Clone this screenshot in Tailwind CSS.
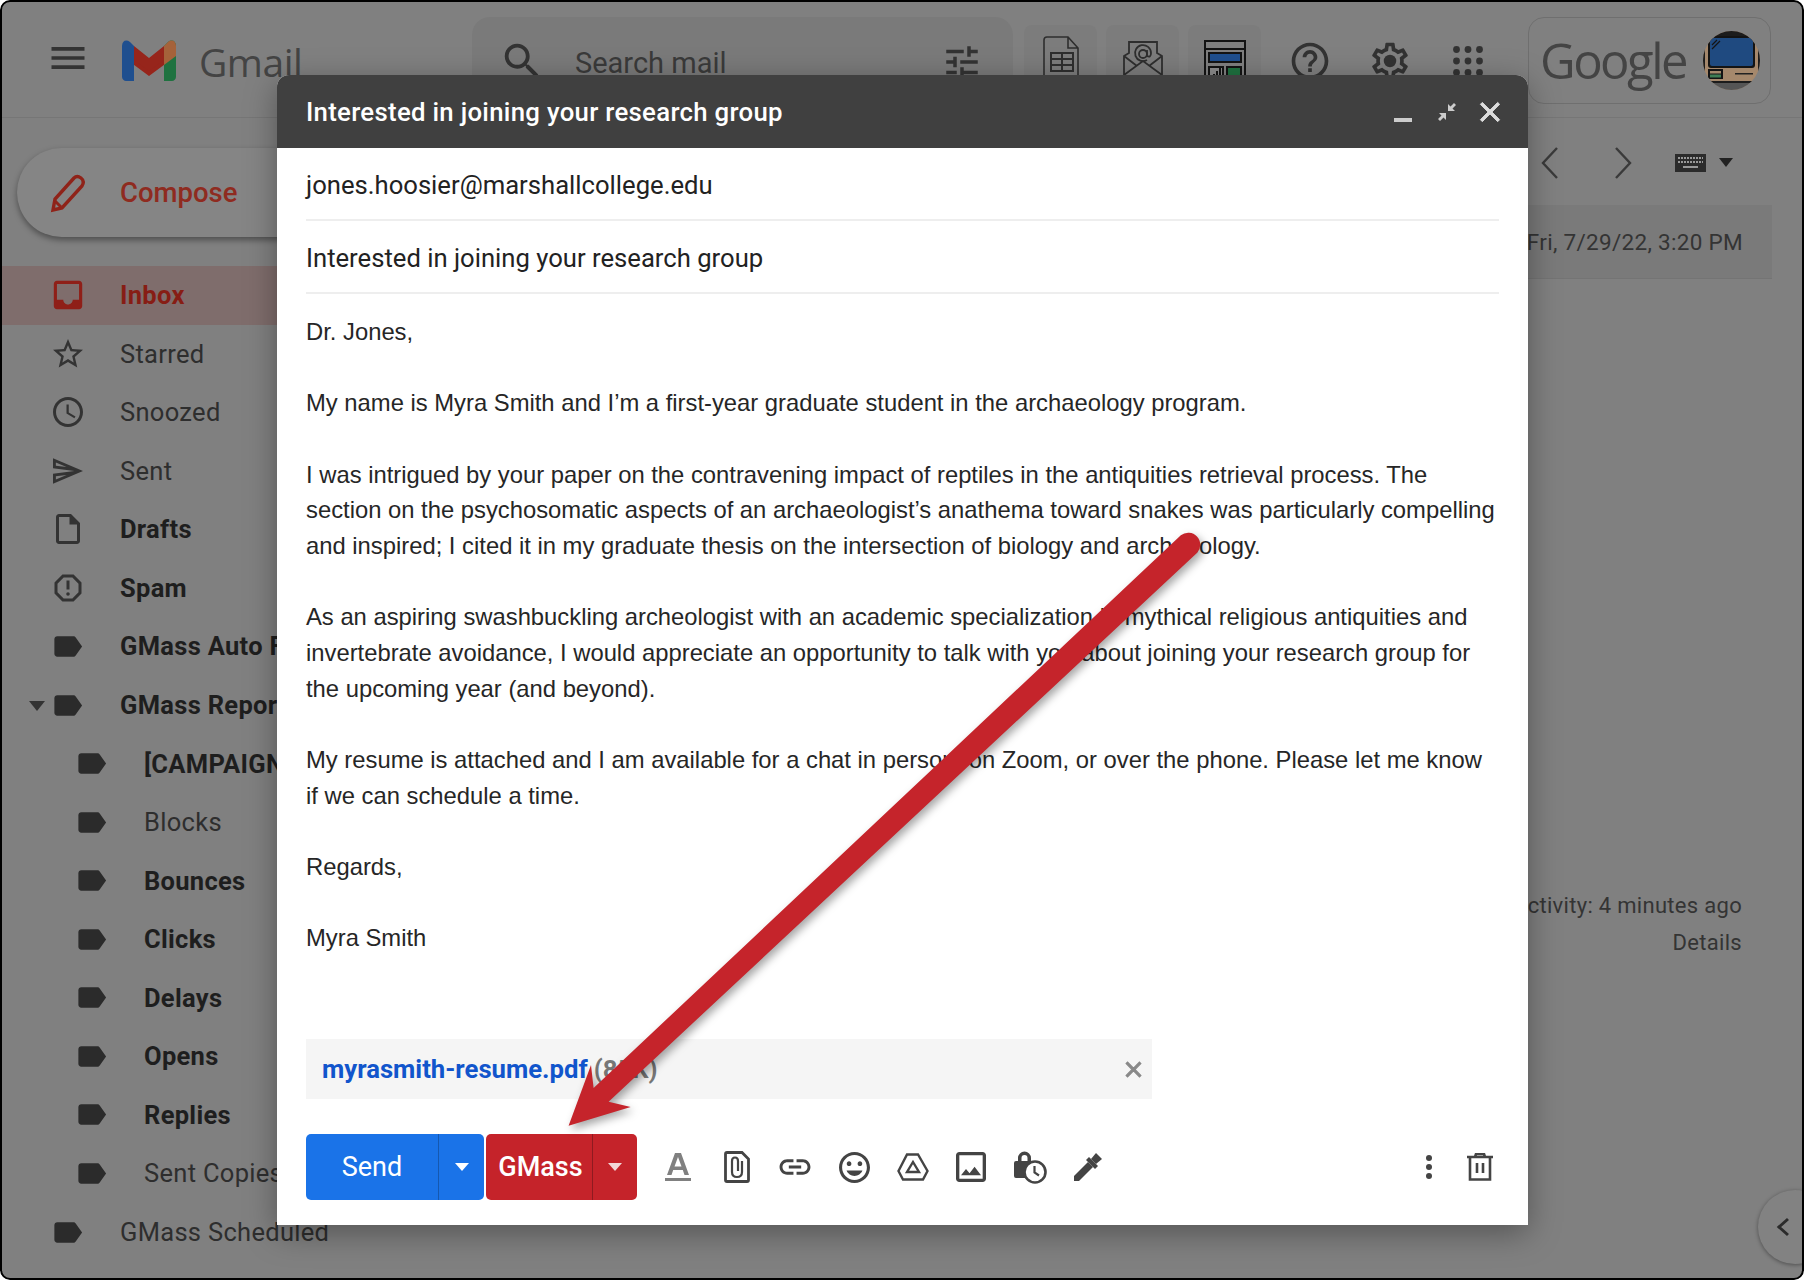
<!DOCTYPE html>
<html lang="en">
<head>
<meta charset="utf-8">
<title>Gmail - GMass compose</title>
<script src="https://cdn.jsdelivr.net/npm/@tailwindcss/browser@4"></script>
</head>
<body class="bg-white">
<svg class="hidden">
  <symbol id="label" viewBox="0 0 24 24"><path d="M17.63 5.84C17.27 5.33 16.67 5 16 5L5 5.01C3.9 5.01 3 5.9 3 7v10c0 1.1.9 1.99 2 1.99L16 19c.67 0 1.27-.33 1.63-.84L22 12l-4.37-6.16z"/></symbol>
</svg>

<div class="relative w-[1804px] h-[1280px] overflow-hidden rounded-[10px] bg-[#808080] font-['Roboto',sans-serif] text-[#2e2e2e]">

  <!-- top bar -->
  <header class="flex h-[118px] border-b border-[#767676]">
    <div class="flex w-[472px] shrink-0 pl-[46px] pt-[36px]">
      <svg class="w-[44px] h-[44px] fill-[#333]" viewBox="0 0 24 24"><path d="M3 18h18v-2H3v2zm0-5h18v-2H3v2zm0-7v2h18V6H3z"/></svg>
      <svg class="ml-[32px] mt-[4px] w-[54px] h-[41px]" viewBox="0 0 54 41">
        <path d="M0 6 27 26 54 6V16L27 36 0 16Z" fill="#97251b"/>
        <path d="M0 6C0 1 4-1 8 2L12 6V41H4C2 41 0 39 0 37Z" fill="#1f4f8f"/>
        <path d="M54 6C54 1 50-1 46 2L42 6V41H50C52 41 54 39 54 37Z" fill="#1f7240"/>
        <path d="M42 6 46 2C50-1 54 1 54 6V16L42 25Z" fill="#a5623a"/>
        <path d="M12 6 27 18 42 6V20L27 31 12 20Z" fill="#97251b"/>
      </svg>
      <span class="ml-[23px] mt-[-2px] text-[39px] leading-[56px] tracking-[-0.5px] font-['Open_Sans',sans-serif] text-[#444]">Gmail</span>
    </div>
    <div class="flex w-[541px] h-[90px] mt-[17px] shrink-0 rounded-t-[18px] bg-[#7a7a7a]">
      <svg class="ml-[27px] mt-[21px] w-[46px] h-[46px] fill-[#333]" viewBox="0 0 24 24"><path d="M15.5 14h-.79l-.28-.27C15.41 12.59 16 11.11 16 9.5 16 5.91 13.09 3 9.5 3S3 5.91 3 9.500 5.91 16 9.5 16c1.61 0 3.09-.59 4.23-1.57l.27.28v.79l5 4.99L20.49 19l-4.99-5zm-6 0C7.01 14 5 11.99 5 9.5S7.01 5 9.5 5 14 7.01 14 9.5 11.99 14 9.5 14z"/></svg>
      <span class="ml-[30px] mt-[28px] text-[29px] leading-[36px] text-[#3a3a3a]">Search mail</span>
      <svg class="ml-auto mr-[30px] mt-[24px] w-[42px] h-[42px] fill-[#333]" viewBox="0 0 24 24"><path d="M3 17v2h6v-2H3zM3 5v2h10V5H3zm10 16v-2h8v-2h-8v-2h-2v6h2zM7 9v2H3v2h4v2h2V9H7zm14 4v-2H11v2h10zm-6-4h2V7h4V5h-4V3h-2v6z"/></svg>
    </div>
    <div class="flex gap-[9px] ml-[11px] mt-[25px] shrink-0">
      <div class="flex justify-center w-[73px] h-[70px] rounded-t-[8px] bg-[#7c7c7c]">
        <svg class="mt-[11px] w-[38px] h-[50px] fill-none stroke-[#2e2e2e] stroke-[1.6]" viewBox="0 0 38 50"><path d="M5 1H26L36 12V46Q36 49 33 49H5Q2 49 2 46V4Q2 1 5 1ZM26 1V12H36"/><path d="M9 17H31V35H9ZM9 23H31M9 29H31M20 17V35" stroke-width="2"/></svg>
      </div>
      <div class="flex justify-center w-[73px] h-[70px] rounded-t-[8px] bg-[#7c7c7c]">
        <svg class="mt-[15px] w-[40px] h-[50px] fill-none stroke-[#2e2e2e] stroke-[1.8]" viewBox="0 0 40 50"><path d="M1 16V48H39V16L34 13V2H6V13ZM1 16 14 26M39 16 26 26M1 35 20 21 39 35"/><circle cx="20" cy="14" r="4"/><path d="M24 10V16Q28 18 28 13A8 8 0 1 0 24 20"/></svg>
      </div>
      <div class="flex justify-center w-[73px] h-[70px] rounded-t-[8px] bg-[#7c7c7c]">
        <svg class="mt-[15px] w-[42px] h-[60px]" viewBox="0 0 42 60">
          <rect width="42" height="60" fill="#141414"/><rect x="2" y="2" width="38" height="56" fill="#808080"/><rect x="0" y="8" width="42" height="2" fill="#141414"/>
          <rect x="4" y="12" width="34" height="11" fill="#141414"/><rect x="6" y="14" width="30" height="7" fill="#1f4f8f"/>
          <rect x="4" y="26" width="16" height="30" fill="#141414"/><rect x="6" y="28" width="12" height="26" fill="#8c8c8c"/>
          <path d="M9 40H11V34H9ZM12 40H14V31H12ZM15 40H17V28H15Z" fill="#141414"/>
          <rect x="22" y="26" width="16" height="30" fill="#141414"/><rect x="24" y="28" width="12" height="26" fill="#1f7240"/>
        </svg>
      </div>
    </div>
    <div class="flex shrink-0">
      <svg class="ml-[27px] mt-[39px] w-[44px] h-[44px] fill-[#333]" viewBox="0 0 24 24"><path d="M11 18h2v-2h-2v2zm1-16C6.48 2 2 6.48 2 12s4.48 10 10 10 10-4.48 10-10S17.52 2 12 2zm0 18c-4.41 0-8-3.59-8-8s3.59-8 8-8 8 3.59 8 8-3.59 8-8 8zm0-14c-2.21 0-4 1.79-4 4h2c0-1.1.9-2 2-2s2 .9 2 2c0 2-3 1.75-3 5h2c0-2.25 3-2.5 3-5 0-2.21-1.79-4-4-4z"/></svg>
      <svg class="ml-[36px] mt-[39px] w-[44px] h-[44px] fill-[#333]" viewBox="0 0 24 24"><path d="M19.43 12.98c.04-.32.07-.64.07-.98 0-.34-.03-.66-.07-.98l2.11-1.65c.19-.15.24-.42.12-.64l-2-3.46c-.09-.16-.26-.25-.44-.25-.06 0-.12.01-.17.03l-2.49 1c-.52-.4-1.08-.73-1.69-.98l-.38-2.65C14.46 2.18 14.25 2 14 2h-4c-.25 0-.46.18-.49.42l-.38 2.65c-.61.25-1.17.59-1.69.98l-2.49-1c-.06-.02-.12-.03-.18-.03-.17 0-.34.09-.43.25l-2 3.46c-.13.22-.07.49.12.64l2.11 1.65c-.04.32-.07.65-.07.98 0 .33.03.66.07.98l-2.11 1.65c-.19.15-.24.42-.12.64l2 3.46c.09.16.26.25.44.25.06 0 .12-.01.17-.03l2.49-1c.52.4 1.08.73 1.69.98l.38 2.65c.03.24.24.42.49.42h4c.25 0 .46-.18.49-.42l.38-2.65c.61-.25 1.17-.59 1.69-.98l2.49 1c.06.02.12.03.18.03.17 0 .34-.09.43-.25l2-3.46c.12-.22.07-.49-.12-.64l-2.11-1.65zm-1.98-1.71c.04.31.05.52.05.73 0 .21-.02.43-.05.73l-.14 1.13.89.7 1.08.84-.7 1.21-1.27-.51-1.04-.42-.9.68c-.43.32-.84.56-1.25.73l-1.06.43-.16 1.13-.2 1.35h-1.4l-.19-1.35-.16-1.13-1.06-.43c-.43-.18-.83-.41-1.23-.71l-.91-.7-1.06.43-1.27.51-.7-1.21 1.08-.84.89-.7-.14-1.13c-.03-.31-.05-.54-.05-.74s.02-.43.05-.73l.14-1.13-.89-.7-1.08-.84.7-1.21 1.27.51 1.04.42.9-.68c.43-.32.84-.56 1.25-.73l1.06-.43.16-1.13.2-1.35h1.39l.19 1.35.16 1.13 1.06.43c.43.18.83.41 1.23.71l.91.7 1.06-.43 1.27-.51.7 1.21-1.07.85-.89.7.14 1.13z"/><circle cx="12" cy="12" r="3.4"/></svg>
      <svg class="ml-[34px] mt-[39px] w-[44px] h-[44px] fill-[#333]" viewBox="0 0 44 44"><circle cx="10.500" cy="10.500" r="3.400"/><circle cx="22" cy="10.500" r="3.400"/><circle cx="33.500" cy="10.500" r="3.400"/><circle cx="10.500" cy="22" r="3.400"/><circle cx="22" cy="22" r="3.400"/><circle cx="33.500" cy="22" r="3.400"/><circle cx="10.500" cy="33.500" r="3.400"/><circle cx="22" cy="33.500" r="3.400"/><circle cx="33.500" cy="33.500" r="3.400"/></svg>
    </div>
    <div class="flex items-center w-[243px] h-[87px] ml-[38px] mt-[17px] shrink-0 rounded-[16px] border border-[#6f6f6f] pl-[11px]">
      <span class="font-['Open_Sans',sans-serif] font-medium text-[49px] leading-[60px] tracking-[-2.500px] text-[#444] mt-[-1px]">Google</span>
      <svg class="ml-auto mr-[10px] w-[57px] h-[59px]" viewBox="0 0 57 59">
        <clipPath id="av"><ellipse cx="28.500" cy="29.500" rx="28.500" ry="29.500"/></clipPath>
        <g clip-path="url(#av)">
          <rect width="57" height="59" fill="#a5886c"/>
          <rect width="57" height="5" fill="#1c1c1c"/><rect y="51" width="57" height="8" fill="#555"/><rect y="50" width="57" height="2" fill="#1c1c1c"/>
          <rect width="2" height="59" fill="#1c1c1c"/><rect x="55" width="2" height="59" fill="#1c1c1c"/>
          <rect x="5" y="5" width="47" height="32" rx="3" fill="#141414"/><rect x="7" y="7" width="43" height="28" rx="2" fill="#1f4a80"/>
          <path d="M9 14 14 9M9 18 17 10" stroke="#141414" stroke-width="1.200"/>
          <rect x="5" y="38" width="15" height="10" fill="#141414"/><rect x="7" y="40" width="11" height="2.500" fill="#a5886c"/><rect x="7" y="43.500" width="11" height="3" fill="#3f7d55"/>
          <rect x="32" y="42" width="18" height="1.500" fill="#222"/>
        </g>
      </svg>
    </div>
  </header>

  <div class="flex">
    <!-- sidebar -->
    <aside class="w-[277px] shrink-0">
      <div class="pl-[17px] pt-[30px]">
        <div class="flex items-center w-[340px] h-[89px] rounded-full bg-[#858585] shadow-[0_3px_6px_rgba(0,0,0,0.4)] pl-[31px]">
          <svg class="w-[40px] h-[40px] fill-none stroke-[#8f2319] stroke-[3.4] mt-[2px]" viewBox="0 0 40 40"><path d="M5 36 7 25 26 4Q29 1 33 4T34 12L14 34Z"/><path d="M7 27 13 33" stroke-width="3"/></svg>
          <span class="ml-[32px] text-[27.5px] leading-[40px] font-medium text-[#8f2b20]">Compose</span>
        </div>
      </div>
      <nav class="mt-[29px] text-[25.5px] tracking-[0.3px]">
        <div class="flex items-center h-[58.56px] bg-[#7f6d6c] pl-[53px] font-bold text-[#871d15]">
          <svg class="w-[30px] h-[30px] shrink-0 fill-[#8f1f18] mr-[37px]" viewBox="2.500 2.500 19 19"><path d="M19 3H4.99c-1.11 0-1.98.89-1.98 2L3 19c0 1.1.88 2 1.99 2H19c1.1 0 2-.9 2-2V5c0-1.11-.9-2-2-2zm0 12h-4c0 1.66-1.35 3-3 3s-3-1.34-3-3H4.99V5H19v10z"/></svg>
          <span class="min-w-0 overflow-hidden whitespace-nowrap">Inbox</span>
        </div>
        <div class="flex items-center h-[58.56px] pl-[53px]">
          <svg class="w-[30px] h-[30px] shrink-0 fill-[#333] mr-[37px]" viewBox="2 2 20 20"><path d="M22 9.24l-7.19-.62L12 2 9.19 8.63 2 9.24l5.46 4.73L5.82 21 12 17.27 18.18 21l-1.63-7.03L22 9.24zM12 15.4l-3.76 2.27 1-4.28-3.32-2.88 4.38-.38L12 6.1l1.71 4.04 4.38.38-3.32 2.88 1 4.28L12 15.4z"/></svg>
          <span class="min-w-0 overflow-hidden whitespace-nowrap">Starred</span>
        </div>
        <div class="flex items-center h-[58.56px] pl-[53px]">
          <svg class="w-[30px] h-[30px] shrink-0 fill-[#333] mr-[37px]" viewBox="2 2 20 20"><path d="M11.99 2C6.47 2 2 6.48 2 12s4.47 10 9.99 10C17.52 22 22 17.52 22 12S17.52 2 11.99 2zM12 20c-4.42 0-8-3.58-8-8s3.58-8 8-8 8 3.58 8 8-3.58 8-8 8zm.5-13H11v6l5.25 3.15.75-1.23-4.5-2.67z"/></svg>
          <span class="min-w-0 overflow-hidden whitespace-nowrap">Snoozed</span>
        </div>
        <div class="flex items-center h-[58.56px] pl-[53px]">
          <svg class="w-[30px] h-[30px] shrink-0 fill-[#333] mr-[37px]" viewBox="2 2 21 20"><path d="M4.01 6.03l7.51 3.22-7.52-1 .01-2.22m7.5 8.72L4 17.97v-2.22l7.51-1M2.01 3L2 10l15 2-15 2 .01 7L23 12 2.01 3z"/></svg>
          <span class="min-w-0 overflow-hidden whitespace-nowrap">Sent</span>
        </div>
        <div class="flex items-center h-[58.56px] pl-[53px] font-bold text-[#1e1e1e]">
          <svg class="w-[30px] h-[30px] shrink-0 fill-[#333] mr-[37px]" viewBox="2 2 20 20"><path d="M14 2H6c-1.1 0-1.99.9-1.99 2L4 20c0 1.1.89 2 1.99 2H18c1.1 0 2-.9 2-2V8l-6-6zm4 18H6V4h7v5h5v11z"/></svg>
          <span class="min-w-0 overflow-hidden whitespace-nowrap">Drafts</span>
        </div>
        <div class="flex items-center h-[58.56px] pl-[53px] font-bold text-[#1e1e1e]">
          <svg class="w-[30px] h-[30px] shrink-0 fill-[#333] mr-[37px]" viewBox="2 2 20 20"><path d="M15.73 3H8.27L3 8.27v7.46L8.27 21h7.46L21 15.73V8.27L15.73 3zM19 14.9L14.9 19H9.1L5 14.9V9.1L9.1 5h5.8L19 9.1v5.8z"/><path d="M11 7h2v6h-2z"/><circle cx="12" cy="16" r="1.2"/></svg>
          <span class="min-w-0 overflow-hidden whitespace-nowrap">Spam</span>
        </div>
        <div class="flex items-center h-[58.56px] pl-[50px] font-bold text-[#1e1e1e]">
          <svg class="w-[35px] h-[35px] shrink-0 fill-[#2b2b2b] mr-[35px]" viewBox="0 0 24 24"><use href="#label"/></svg>
          <span class="min-w-0 overflow-hidden whitespace-nowrap">GMass Auto F</span>
        </div>
        <div class="relative flex items-center h-[58.56px] pl-[50px] font-bold text-[#1e1e1e]">
          <svg class="absolute left-[29px] top-[25px] w-[16px] h-[10px] fill-[#333]" viewBox="0 0 16 10"><path d="M0 0H16L8 10Z"/></svg>
          <svg class="w-[35px] h-[35px] shrink-0 fill-[#2b2b2b] mr-[35px]" viewBox="0 0 24 24"><use href="#label"/></svg>
          <span class="min-w-0 overflow-hidden whitespace-nowrap">GMass Reports</span>
        </div>
        <div class="flex items-center h-[58.56px] pl-[74px] font-bold text-[#1e1e1e]">
          <svg class="w-[35px] h-[35px] shrink-0 fill-[#2b2b2b] mr-[35px]" viewBox="0 0 24 24"><use href="#label"/></svg>
          <span class="min-w-0 overflow-hidden whitespace-nowrap">[CAMPAIGNS]</span>
        </div>
        <div class="flex items-center h-[58.56px] pl-[74px]">
          <svg class="w-[35px] h-[35px] shrink-0 fill-[#2b2b2b] mr-[35px]" viewBox="0 0 24 24"><use href="#label"/></svg>
          <span class="min-w-0 overflow-hidden whitespace-nowrap">Blocks</span>
        </div>
        <div class="flex items-center h-[58.56px] pl-[74px] font-bold text-[#1e1e1e]">
          <svg class="w-[35px] h-[35px] shrink-0 fill-[#2b2b2b] mr-[35px]" viewBox="0 0 24 24"><use href="#label"/></svg>
          <span class="min-w-0 overflow-hidden whitespace-nowrap">Bounces</span>
        </div>
        <div class="flex items-center h-[58.56px] pl-[74px] font-bold text-[#1e1e1e]">
          <svg class="w-[35px] h-[35px] shrink-0 fill-[#2b2b2b] mr-[35px]" viewBox="0 0 24 24"><use href="#label"/></svg>
          <span class="min-w-0 overflow-hidden whitespace-nowrap">Clicks</span>
        </div>
        <div class="flex items-center h-[58.56px] pl-[74px] font-bold text-[#1e1e1e]">
          <svg class="w-[35px] h-[35px] shrink-0 fill-[#2b2b2b] mr-[35px]" viewBox="0 0 24 24"><use href="#label"/></svg>
          <span class="min-w-0 overflow-hidden whitespace-nowrap">Delays</span>
        </div>
        <div class="flex items-center h-[58.56px] pl-[74px] font-bold text-[#1e1e1e]">
          <svg class="w-[35px] h-[35px] shrink-0 fill-[#2b2b2b] mr-[35px]" viewBox="0 0 24 24"><use href="#label"/></svg>
          <span class="min-w-0 overflow-hidden whitespace-nowrap">Opens</span>
        </div>
        <div class="flex items-center h-[58.56px] pl-[74px] font-bold text-[#1e1e1e]">
          <svg class="w-[35px] h-[35px] shrink-0 fill-[#2b2b2b] mr-[35px]" viewBox="0 0 24 24"><use href="#label"/></svg>
          <span class="min-w-0 overflow-hidden whitespace-nowrap">Replies</span>
        </div>
        <div class="flex items-center h-[58.56px] pl-[74px]">
          <svg class="w-[35px] h-[35px] shrink-0 fill-[#2b2b2b] mr-[35px]" viewBox="0 0 24 24"><use href="#label"/></svg>
          <span class="min-w-0 overflow-hidden whitespace-nowrap">Sent Copies</span>
        </div>
        <div class="flex items-center w-[400px] h-[58.56px] pl-[50px]">
          <svg class="w-[35px] h-[35px] shrink-0 fill-[#2b2b2b] mr-[35px]" viewBox="0 0 24 24"><use href="#label"/></svg>
          <span class="whitespace-nowrap">GMass Scheduled</span>
        </div>
      </nav>
    </aside>

    <!-- message pane, mostly hidden by the compose window -->
    <main class="flex-1 text-[22px] tracking-[0.3px] text-[#343434]">
      <div class="flex items-center justify-end h-[87px] pr-[71px] pt-[2px]">
        <svg class="w-[22px] h-[34px] fill-none stroke-[#3a3a3a] stroke-[2.4] mr-[51px]" viewBox="0 0 22 34"><path d="M18 2 4 17 18 32"/></svg>
        <svg class="w-[22px] h-[34px] fill-none stroke-[#3a3a3a] stroke-[2.4] mr-[41px]" viewBox="0 0 22 34"><path d="M4 2 18 17 4 32"/></svg>
        <svg class="w-[31px] h-[18px] mr-[13px]" viewBox="0 0 31 18"><rect width="31" height="18" fill="#2b2b2b"/><path d="M3 4H28M3 8H28" stroke="#999" stroke-width="2" stroke-dasharray="2 1"/><path d="M8 13H23" stroke="#999" stroke-width="2"/></svg>
        <svg class="w-[14px] h-[9px] fill-[#222]" viewBox="0 0 14 9"><path d="M0 0H14L7 9Z"/></svg>
      </div>
      <div class="flex items-center justify-end w-[1495px] h-[74px] border-b border-[#747474] bg-[#7a7a7a] pr-[29px] pt-[3px] text-[22.5px]">
        <span class="whitespace-nowrap">Fri, 7/29/22, 3:20 PM</span>
      </div>
      <div class="mt-[608px] pr-[62px] text-right leading-[37px]">
        <p>Last account activity: 4 minutes ago</p>
        <p>Details</p>
      </div>
    </main>
  </div>

  <!-- side panel toggle -->
  <div class="absolute left-[1758px] top-[1190px] flex items-center w-[74px] h-[74px] rounded-full bg-[#828282] shadow-[0_1px_4px_rgba(0,0,0,0.4)] pl-[18px]">
    <svg class="w-[14px] h-[20px] fill-none stroke-[#2b2b2b] stroke-[3]" viewBox="0 0 14 20"><path d="M12 2 3 10 12 18"/></svg>
  </div>

  <!-- compose window -->
  <section class="absolute left-[277px] top-[75px] flex flex-col w-[1251px] h-[1150px] rounded-t-[12px] bg-white shadow-[0_8px_32px_rgba(0,0,0,0.35)] font-['Liberation_Sans',sans-serif] text-[#222] text-[23.8px]">
    <div class="flex items-center h-[73px] shrink-0 rounded-t-[12px] bg-[#404040] pl-[29px] pr-[27px] text-white">
      <span class="mt-[1px] font-['Roboto',sans-serif] text-[25.75px] font-medium tracking-[0.3px]">Interested in joining your research group</span>
      <svg class="ml-auto w-[18px] h-[18px] mt-[10px]" viewBox="0 0 18 18"><rect y="10" width="18" height="4" fill="#ccc"/></svg>
      <svg class="ml-[25px] w-[20px] h-[20px] fill-[#ccc] mt-[1px]" viewBox="0 0 20 20"><path d="M11 9V2L13.500 4.500 17 1 19 3 15.500 6.500 18 9ZM9 11V18L6.500 15.500 3 19 1 17 4.500 13.500 2 11Z"/></svg>
      <svg class="ml-[22px] w-[22px] h-[22px] fill-[#ddd] stroke-[#ddd] stroke-[0.7] mt-[1px]" viewBox="4 4 16 16"><path d="M19 6.41L17.59 5 12 10.59 6.41 5 5 6.41 10.59 12 5 17.59 6.41 19 12 13.41 17.59 19 19 17.59 13.41 12z"/></svg>
    </div>
    <div class="flex flex-col flex-1 px-[29px]">
      <div class="flex items-center h-[73px] shrink-0 border-b-2 border-[#eeeeee] pt-[3px] font-['Roboto',sans-serif] text-[25.65px]">jones.hoosier@marshallcollege.edu</div>
      <div class="flex items-center h-[73px] shrink-0 border-b-2 border-[#eeeeee] pt-[3px] font-['Roboto',sans-serif] text-[25.65px]">Interested in joining your research group</div>
      <div class="flex-1 pt-[20px] leading-[35.67px] whitespace-nowrap text-[#262626]">
        <p>Dr. Jones,</p>
        <p class="mt-[35.67px]">My name is Myra Smith and I’m a first-year graduate student in the archaeology program.</p>
        <p class="mt-[35.67px]">I was intrigued by your paper on the contravening impact of reptiles in the antiquities retrieval process. The<br>section on the psychosomatic aspects of an archaeologist’s anathema toward snakes was particularly compelling<br>and inspired; I cited it in my graduate thesis on the intersection of biology and archaeology.</p>
        <p class="mt-[35.67px]">As an aspiring swashbuckling archeologist with an academic specialization in mythical religious antiquities and<br>invertebrate avoidance, I would appreciate an opportunity to talk with you about joining your research group for<br>the upcoming year (and beyond).</p>
        <p class="mt-[35.67px]">My resume is attached and I am available for a chat in person, on Zoom, or over the phone. Please let me know<br>if we can schedule a time.</p>
        <p class="mt-[35.67px]">Regards,</p>
        <p class="mt-[35.67px]">Myra Smith</p>
      </div>
      <div class="flex items-center w-[846px] h-[60px] shrink-0 bg-[#f5f5f5] pl-[16px] pr-[10px] mb-[35px] font-['Roboto',sans-serif] text-[25.7px]">
        <span class="mt-[1px] font-bold text-[#1155cc]">myrasmith-resume.pdf</span>
        <span class="mt-[1px] ml-[6px] font-bold text-[#777]">(85K)</span>
        <svg class="ml-auto w-[17px] h-[17px] fill-[#888] stroke-[#888] stroke-[1]" viewBox="4 4 16 16"><path d="M19 6.41L17.59 5 12 10.59 6.41 5 5 6.41 10.59 12 5 17.59 6.41 19 12 13.41 17.59 19 19 17.59 13.41 12z"/></svg>
      </div>
      <div class="flex items-center h-[66px] mb-[25px] shrink-0 font-['Roboto',sans-serif] text-white">
        <div class="flex items-center w-[178px] h-full rounded-[5px] bg-[#1a73e8]">
          <span class="flex-1 text-center text-[27px]">Send</span>
          <div class="flex items-center justify-center w-[46px] h-full border-l border-[#1558b0]">
            <svg class="w-[14px] h-[8px] fill-white" viewBox="0 0 14 8"><path d="M0 0H14L7 8Z"/></svg>
          </div>
        </div>
        <div class="flex items-center w-[151px] h-full ml-[2px] rounded-[5px] bg-[#c5232a]">
          <span class="flex-1 pl-[3px] text-center text-[27px] font-medium">GMass</span>
          <div class="flex items-center justify-center w-[45px] h-full border-l border-[#8f1a20]">
            <svg class="w-[14px] h-[8px] fill-[#f2d7d8]" viewBox="0 0 14 8"><path d="M0 0H14L7 8Z"/></svg>
          </div>
        </div>
        <div class="flex items-center ml-[12px]">
          <div class="flex justify-center w-[58.6px]"><svg class="w-[26px] h-[30px] fill-[#808080]" viewBox="0 0 26 30"><path d="M10 1H16L24 23H19.500L17.800 18H8.200L6.500 23H2ZM9.500 14.500H16.500L13 5Z" fill-rule="evenodd"/><rect x="0" y="26" width="26" height="3"/></svg></div>
          <div class="flex justify-center w-[58.6px]"><svg class="w-[26px] h-[32px] fill-none stroke-[#444] stroke-[2.8]" viewBox="0 0 26 32"><path d="M3 1.500H18L24.500 8V29Q24.500 30.500 23 30.500H3Q1.500 30.500 1.500 29V3Q1.500 1.500 3 1.500Z"/><path d="M18 10V21Q18 26 13 26T8 21V10Q8 6.500 11 6.500T14 10V20" stroke-width="2.200"/></svg></div>
          <div class="flex justify-center w-[58.6px]"><svg class="w-[34px] h-[34px] fill-[#444]" viewBox="1 1 22 22"><path d="M3.9 12c0-1.71 1.39-3.1 3.1-3.1h4V7H7c-2.76 0-5 2.24-5 5s2.24 5 5 5h4v-1.900H7c-1.71 0-3.1-1.39-3.1-3.1zM8 13h8v-2H8v2zm9-6h-4v1.9h4c1.71 0 3.1 1.39 3.1 3.1s-1.39 3.1-3.1 3.1h-4V17h4c2.76 0 5-2.24 5-5s-2.24-5-5-5z"/></svg></div>
          <div class="flex justify-center w-[58.6px]"><svg class="w-[31px] h-[31px] fill-[#444]" viewBox="2 2 20 20"><path d="M11.99 2C6.47 2 2 6.48 2 12s4.47 10 9.99 10C17.52 22 22 17.52 22 12S17.52 2 11.99 2zM12 20c-4.42 0-8-3.58-8-8s3.58-8 8-8 8 3.58 8 8-3.58 8-8 8zm3.500-9c.83 0 1.500-.67 1.500-1.500S16.330 8 15.500 8 14 8.670 14 9.500s.67 1.500 1.500 1.500zm-7 0c.83 0 1.500-.67 1.500-1.500S9.330 8 8.500 8 7 8.670 7 9.500 7.670 11 8.500 11zm3.500 6.500c2.330 0 4.310-1.460 5.110-3.500H6.890c.8 2.040 2.780 3.500 5.110 3.500z"/></svg></div>
          <div class="flex justify-center w-[58.6px]"><svg class="w-[32px] h-[28px] fill-none stroke-[#444] stroke-[2.4]" viewBox="0 0 32 28"><path d="M10 1.500H21L30.500 18 26 26.500H6L1.500 18Z"/><path d="M16 9 22 19H10Z"/></svg></div>
          <div class="flex justify-center w-[58.6px]"><svg class="w-[30px] h-[30px] fill-[#444]" viewBox="3 3 18 18"><path d="M19 5v14H5V5h14m0-2H5c-1.100 0-2 .9-2 2v14c0 1.100.9 2 2 2h14c1.100 0 2-.9 2-2V5c0-1.100-.9-2-2-2zm-4.860 8.860l-3 3.870L9 13.140 6 17h12l-3.860-5.140z"/></svg></div>
          <div class="flex justify-center w-[58.6px]"><svg class="w-[34px] h-[34px]" viewBox="0 0 34 34"><path d="M1 13Q1 11 3 11H5V8A6.500 6.500 0 0 1 18 8V11H21V28H3Q1 28 1 26ZM8.500 11H14.500V8A3 3 0 0 0 8.500 8Z" fill="#444" fill-rule="evenodd"/><circle cx="22" cy="22" r="10.500" fill="#fff" stroke="#444" stroke-width="2.600"/><path d="M21.500 16V22.500L26 25.500" fill="none" stroke="#444" stroke-width="2.200"/></svg></div>
          <div class="flex justify-center w-[58.6px]"><svg class="w-[30px] h-[30px] fill-[#444]" viewBox="0 0 30 30"><path d="M1 29V24L15 10 20 15 6 29Z"/><path d="M13 8 16 5 25 14 22 17Z"/><path d="M18 7 23 1 29 7 23 12Z"/></svg></div>
        </div>
        <svg class="ml-auto w-[10px] h-[26px] fill-[#444] mr-[33px]" viewBox="0 0 10 26"><circle cx="5" cy="4" r="3"/><circle cx="5" cy="13" r="3"/><circle cx="5" cy="22" r="3"/></svg>
        <svg class="w-[26px] h-[28px] mr-[6px] fill-none stroke-[#444] stroke-[2.6]" viewBox="0 0 26 28"><path d="M0 4H26M8 4 9 1H17L18 4M3 4V26.500H23V4M10 10V20M16 10V20"/></svg>
      </div>
    </div>
  </section>

  <!-- annotation arrow -->
  <svg class="absolute inset-0 w-[1804px] h-[1280px] pointer-events-none drop-shadow-[3px_4px_4px_rgba(0,0,0,0.35)]" viewBox="0 0 1804 1280">
    <path d="M568.600 1125.700 591 1065 593.600 1088 1180.800 535.300A12 12 0 0 1 1197.200 552.700L608.600 1101.700 630.700 1107Z" fill="#c5242b"/>
  </svg>

  <!-- screenshot frame -->
  <div class="absolute inset-0 rounded-[10px] border-2 border-black pointer-events-none"></div>
</div>
</body>
</html>
